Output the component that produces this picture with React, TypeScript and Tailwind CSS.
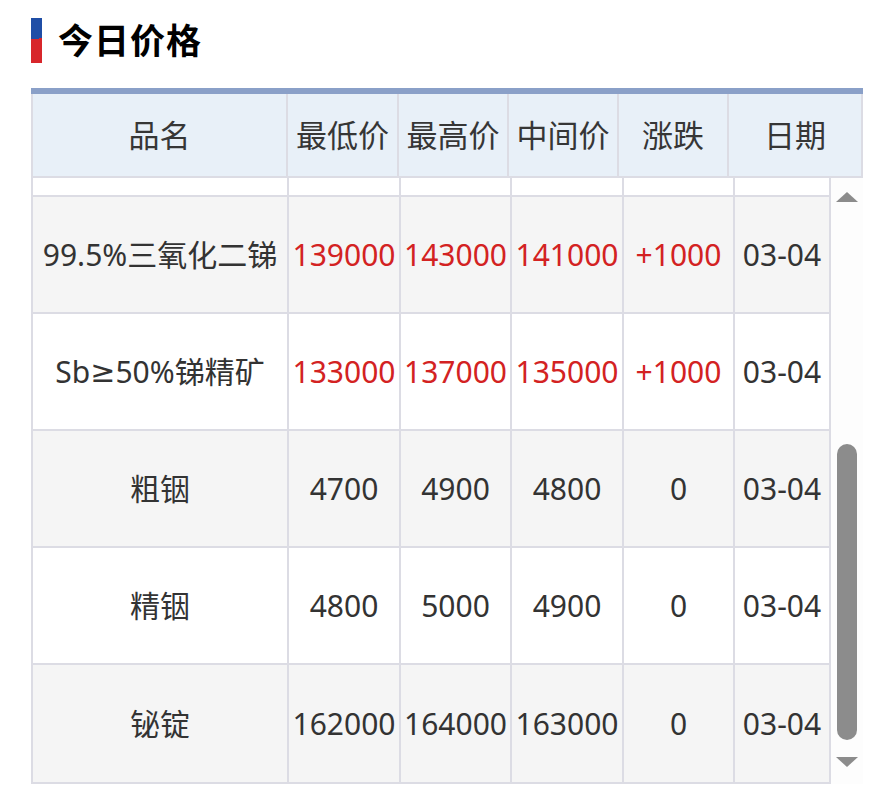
import React from "react";

const font = { fontFamily: '"Noto Sans", "Noto Sans CJK SC", sans-serif' };

type Row = { name: React.ReactNode; low: string; high: string; mid: string; chg: string; date: string; red: boolean; grey: boolean };

const rows: Row[] = [
  { name: "99.5%三氧化二锑", low: "139000", high: "143000", mid: "141000", chg: "+1000", date: "03-04", red: true, grey: true },
  {
    name: (
      <>
        Sb<span className="font-['DejaVu_Sans',sans-serif]">≥</span>50%锑精矿
      </>
    ),
    low: "133000",
    high: "137000",
    mid: "135000",
    chg: "+1000",
    date: "03-04",
    red: true,
    grey: false,
  },
  { name: "粗铟", low: "4700", high: "4900", mid: "4800", chg: "0", date: "03-04", red: false, grey: true },
  { name: "精铟", low: "4800", high: "5000", mid: "4900", chg: "0", date: "03-04", red: false, grey: false },
  { name: "铋锭", low: "162000", high: "164000", mid: "163000", chg: "0", date: "03-04", red: false, grey: true },
];

const bodyCols = ["w-[256px]", "w-[112px]", "w-[111px]", "w-[112px]", "w-[111px]", "w-[96px]"];

export default function App() {
  return (
    <div className="w-[885px] h-[811px] bg-white text-[#333]" style={font}>
      <div className="flex items-center pt-[18px] pl-[31px]">
        <div className="w-[11px] h-[45px] bg-[linear-gradient(176deg,#1f4ea6_46%,#d8262b_46%)]" />
        <div className="ml-[16px] text-[35px] font-bold text-black leading-none tracking-[1px]">今日价格</div>
      </div>
      <div className="ml-[31px] mt-[25px] w-[832px]">
        <div className="h-[6px] bg-[#8aa0c8]" />
        <div className="flex h-[84px] bg-[#e8f0f8] border-l-2 border-b-2 border-[#dcdce4] text-[31px] text-[#363636]">
          {["品名", "最低价", "最高价", "中间价", "涨跌", "日期"].map((h, i) => (
            <div
              key={h}
              className={
                "flex items-center justify-center border-r-2 border-[#dcdce4] " +
                ["w-[255px]", "w-[111px]", "w-[110px]", "w-[110px]", "w-[110px]", "w-[134px]"][i]
              }
            >
              {h}
            </div>
          ))}
        </div>
        <div className="flex">
          <div className="w-[800px] border-l-2 border-b-2 border-[#dcdce4] text-[30px]">
            <div className="flex h-[19px] bg-white border-b-2 border-[#dcdce4]">
              {bodyCols.map((c, i) => (
                <div key={i} className={c + " border-r-2 border-[#dcdce4]"} />
              ))}
            </div>
            {rows.map((r, ri) => {
              const cells = [r.name, r.low, r.high, r.mid, r.chg, r.date];
              return (
                <div
                  key={ri}
                  className={
                    "flex h-[117px] " +
                    (ri < rows.length - 1 ? "border-b-2 border-[#dcdce4] " : "") +
                    (r.grey ? "bg-[#f5f5f5]" : "bg-white")
                  }
                >
                  {cells.map((c, i) => (
                    <div
                      key={i}
                      className={
                        bodyCols[i] +
                        " flex items-center justify-center whitespace-nowrap border-r-2 border-[#dcdce4] " +
                        (r.red && i >= 1 && i <= 4 ? "text-[#d32222]" : "text-[#333]")
                      }
                    >
                      {c}
                    </div>
                  ))}
                </div>
              );
            })}
          </div>
          <div className="w-[32px] flex flex-col items-center bg-[#fdfdfd]">
            <div className="mt-[14px] w-0 h-0 border-l-[11px] border-r-[11px] border-b-[10px] border-l-transparent border-r-transparent border-b-[#8c8c8c]" />
            <div className="mt-[242px] w-[20px] h-[296px] rounded-full bg-[#8c8c8c]" />
            <div className="mt-[17px] w-0 h-0 border-l-[11px] border-r-[11px] border-t-[10px] border-l-transparent border-r-transparent border-t-[#8c8c8c]" />
          </div>
        </div>
      </div>
    </div>
  );
}
